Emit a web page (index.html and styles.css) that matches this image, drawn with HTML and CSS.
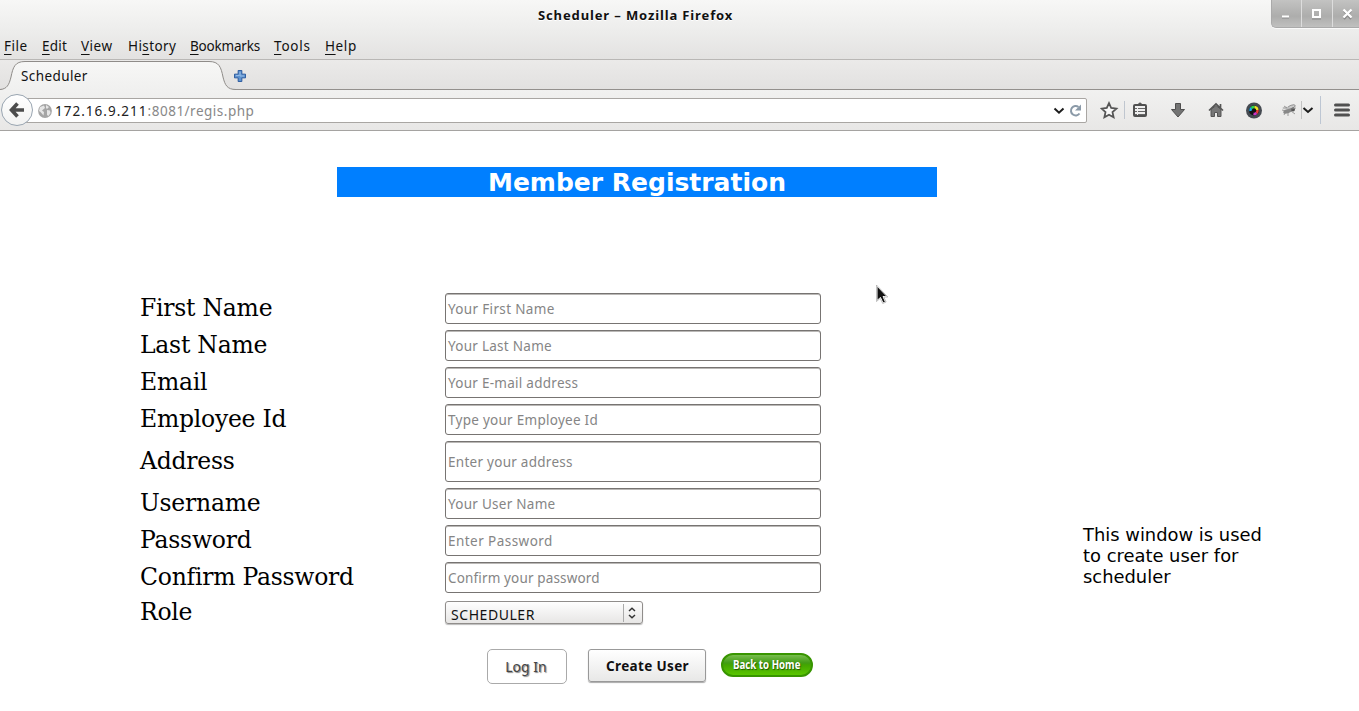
FILE: index.html
```html
<!DOCTYPE html>
<html lang="en">
<head>
<meta charset="utf-8">
<title>Scheduler</title>
<link rel="stylesheet" href="styles.css">
</head>
<body>
<header class="chrome">
  <div class="titlebar">
    <div class="window-title">Scheduler – Mozilla Firefox</div>
    <div class="window-controls">
      <span class="control"><svg width="30" height="27"><path d="M11 17.5h7" stroke="#888" stroke-width="2"/><path d="M11 16.5h7" stroke="#fff" stroke-width="2"/></svg></span>
      <span class="control"><svg width="30" height="27"><path d="M10 19h9" stroke="#888" stroke-width="1"/><rect x="11" y="10" width="7" height="7" fill="none" stroke="#fff" stroke-width="2"/></svg></span>
      <span class="control"><svg width="30" height="27"><path d="M11 11l7 8M18 11l-7 8" stroke="#888" stroke-width="2"/><path d="M10.500 9.500l8 8M18.500 9.500l-8 8" stroke="#fff" stroke-width="2.300"/></svg></span>
    </div>
  </div>
  <nav class="menubar">
    <span class="menu file"><u>F</u>ile</span>
    <span class="menu edit"><u>E</u>dit</span>
    <span class="menu view"><u>V</u>iew</span>
    <span class="menu history">Hi<u>s</u>tory</span>
    <span class="menu bookmarks"><u>B</u>ookmarks</span>
    <span class="menu tools-menu"><u>T</u>ools</span>
    <span class="menu help"><u>H</u>elp</span>
  </nav>
  <div class="tabstrip">
    <svg class="tab-shape" width="236" height="30" viewBox="0 0 236 30">
      <defs><linearGradient id="tabfill" x1="0" y1="0" x2="0" y2="1"><stop offset="0" stop-color="#f7f7f6"/><stop offset="1" stop-color="#f0f0ef"/></linearGradient></defs>
      <path d="M0 30V29.500C7 29 9 25 11 17C13 7 15 1.500 25 1.500H209C219 1.500 221 7 223 17C225 25 227 29.500 236 29.500V30Z" fill="url(#tabfill)"/>
      <path d="M0 29.500C7 29 9 25 11 17C13 7 15 1.500 25 1.500H209C219 1.500 221 7 223 17C225 25 227 29.500 236 29.500" fill="none" stroke="#8f8c89"/>
    </svg>
    <span class="tab-label">Scheduler</span>
    <svg class="new-tab" width="12" height="12" viewBox="0 0 13 13"><path d="M4.500.5h4v4h4v4h-4v4h-4v-4h-4v-4h4z" fill="#5e93d0" stroke="#23549a"/><path d="M6.500 2v4.500H11M2 6h4" fill="none" stroke="#9cc0e8"/></svg>
  </div>
  <div class="navbar">
    <span class="back"><svg width="18" height="18" viewBox="0 0 18 18"><path d="M9.500 2.500L3.500 9l6 6.500M4 9H16" fill="none" stroke="#4c4c4c" stroke-width="3.600"/></svg></span>
    <div class="urlbar">
      <svg class="globe" width="14" height="14" viewBox="0 0 14 14"><circle cx="7" cy="7" r="6.900" fill="#a5a5a5"/><path d="M2 3l4-1.500L7 4 4 6.500 6 8l-.5 3.500L2.500 8 1 7zM8 1l3 2-2 2-1-1zM9 6l3 .5.500 2.500-2 3-1.500-1z" fill="#e6e6e6"/></svg>
      <span class="url"><b>172.16.9.211</b>:8081/regis.php</span>
      <svg class="drop" width="12" height="8" viewBox="0 0 12 8"><path d="M1.500 1.500L6 5.700l4.500-4.200" fill="none" stroke="#1c1c1c" stroke-width="2"/></svg>
      <svg class="reload" width="13" height="13" viewBox="0 0 13 13"><path d="M10.500 9.500A4.700 4.700 0 1 1 9.500 3" fill="none" stroke="#8b9aa8" stroke-width="2"/><path d="M12 .5v6H6z" fill="#8b9aa8"/></svg>
    </div>
    <div class="tools">
      <svg width="259" height="38" viewBox="1100 91 259 38">
        <path d="M1109 103.200l2.200 4.800 5.200.6-3.900 3.500 1.100 5.200-4.600-2.600-4.600 2.600 1.100-5.200-3.900-3.500 5.200-.6z" fill="#f8f8f8" stroke="#555" stroke-width="1.800"/>
        <path d="M1124.500 101v18" stroke="#bfc6cf"/>
        <rect x="1134" y="105" width="12" height="11" rx="1" fill="#eee" stroke="#505050" stroke-width="2"/><path d="M1137 105q.5-.5 1.500-.5 0-1.500 1.500-1.500t1.500 1.500q1 0 1.500.5" stroke="#505050" fill="#505050"/>
        <path d="M1135 108.500h2m1 0h7M1135 111.500h2m1 0h7M1135 114.500h2m1 0h7" stroke="#666"/>
        <path d="M1175.500 103.500h5v6h4l-6.500 7.500-6.500-7.500h4z" fill="#737373" stroke="#4e4e4e"/>
        <path d="M1211 109.500v7h3.500v-4h3v4h3.500v-7l-5-4z" fill="#777" stroke="#555"/><path d="M1209 110.500l7-6.500 7 6.500M1220.500 104v4" fill="none" stroke="#555" stroke-width="1.700"/>
        <circle cx="1254" cy="110.500" r="8" fill="#454a51"/><circle cx="1254" cy="110.500" r="5" fill="#111"/>
        <g fill="none" stroke-width="2.500"><path d="M1250.500 111a3.500 3.500 0 0 1 1-3" stroke="#18a8ed"/><path d="M1251.500 108a3.500 3.500 0 0 1 3-1" stroke="#2cd649"/><path d="M1254.500 107a3.500 3.500 0 0 1 3 3" stroke="#eee329"/><path d="M1257.500 110a3.500 3.500 0 0 1-1 3" stroke="#ed3b34"/><path d="M1256.500 113a3.500 3.500 0 0 1-3 .800" stroke="#cb35c8"/></g>
        <ellipse cx="1288" cy="111" rx="5" ry="2" transform="rotate(-20 1288 111)" fill="#888"/><ellipse cx="1291.500" cy="107" rx="4" ry="1.600" transform="rotate(-20 1291 107)" fill="#ccc" stroke="#888" stroke-width=".8"/><ellipse cx="1286" cy="108" rx="3.500" ry="1.300" fill="#bbb"/><circle cx="1293" cy="109.500" r="2" fill="#555"/><path d="M1282 110l4 1-2 4M1288 112v4M1291 111l4 3M1284 106l3 2M1291 109l5-1" stroke="#888" stroke-width=".8" fill="none"/>
        <path d="M1301.500 101v18" stroke="#c3c3c3"/><path d="M1303.500 108L1308 112l4.500-4" fill="none" stroke="#1c1c1c" stroke-width="2"/>
        <path d="M1320.500 96v28" stroke="#bdc6d3"/>
        <path d="M1335.500 105h13M1335.500 110h13M1335.500 115h13" stroke="#505050" stroke-width="3" stroke-linecap="round"/>
      </svg>
    </div>
  </div>
</header>
<main class="page">
  <h1 class="banner">Member Registration</h1>
  <form class="registration">
    <div class="row"><label>First Name</label><div class="field"><span class="p1">Your First Name</span></div></div>
    <div class="row"><label>Last Name</label><div class="field"><span>Your Last Name</span></div></div>
    <div class="row"><label>Email</label><div class="field"><span>Your E-mail address</span></div></div>
    <div class="row"><label>Employee Id</label><div class="field"><span>Type your Employee Id</span></div></div>
    <div class="row tall"><label>Address</label><div class="field"><span>Enter your address</span></div></div>
    <div class="row"><label>Username</label><div class="field"><span>Your User Name</span></div></div>
    <div class="row"><label>Password</label><div class="field"><span class="p7">Enter Password</span></div></div>
    <div class="row"><label>Confirm Password</label><div class="field"><span class="p8">Confirm your password</span></div></div>
    <div class="row role"><label>Role</label><div class="select"><span>SCHEDULER</span><i><svg width="10" height="12" viewBox="0 0 10 12"><path d="M2 4l3-2.700L8 4M2 8l3 2.700L8 8" fill="none" stroke="#333" stroke-width="1.500"/></svg></i></div></div>
    <div class="actions">
      <a class="login">Log In</a>
      <a class="create">Create User</a>
      <a class="home"><span>Back to Home</span></a>
    </div>
  </form>
  <aside class="note">This window is used<br>to create user for<br>scheduler</aside>
  <svg class="cursor" width="14" height="20" viewBox="0 0 14 20"><path d="M1 1v14.500l3.500-3 2.500 5.500 2.500-1-2.500-5.500h4z" fill="#111" stroke="#fff"/><path d="M.5 0v16.500l3.700-3.200 2.500 5.200 3.400-1.500-2.300-5h4z" fill="none" stroke="#999" stroke-width=".6"/></svg>
</main>
</body>
</html>
```
FILE: styles.css
```css
* { box-sizing: border-box; }
body { margin: 0; width: 1359px; height: 711px; overflow: hidden; background: #fff; font: 14px/20px "Noto Sans", "Open Sans", sans-serif; color: #111; }
svg { display: block; flex: none; }
.chrome { height: 131px; background: #ececeb; }
.titlebar { height: 30px; display: flex; justify-content: flex-end; background: linear-gradient(#f7f7f6, #ededec); }
.window-title { width: 195px; margin-right: 538px; padding-top: 5px; font-weight: bold; font-size: 13px; letter-spacing: .87px; white-space: nowrap; text-shadow: 0 1px #fff; }
.window-controls { width: 88px; height: 28px; display: flex; overflow: hidden; background: linear-gradient(#c3c3c2, #adadac 60%, #c0c0bf); border: solid #aaa; border-width: 0 0 1px 1px; border-radius: 0 0 0 5px; box-shadow: 0 1px #fafafa; }
.control { width: 31px; flex: none; border-right: 1px solid #ddd; margin-left: -1px; }
.control + .control { margin-left: 0; }
.menubar { height: 30px; display: flex; padding: 6px 0 0 4px; background: linear-gradient(#ededec, #e3e2e1); border-bottom: 1px solid #b9b7b5; font-size: 13.500px; line-height: 21px; white-space: nowrap; }
.menu u { text-underline-offset: 3px; text-decoration-thickness: 1px; }
.file { width: 38px; letter-spacing: .5px; }
.edit { width: 39px; letter-spacing: .2px; }
.view { width: 47px; letter-spacing: .5px; }
.history { width: 62px; letter-spacing: .4px; }
.bookmarks { width: 84px; letter-spacing: -.2px; }
.tools-menu { width: 51px; letter-spacing: .8px; }
.help { letter-spacing: .6px; }
.tabstrip { height: 30px; display: grid; grid-template-columns: 21px 213px 1fr; background: linear-gradient(#ebeae9, #e2e1e0); border-bottom: 1px solid #93908d; }
.tab-shape { grid-area: 1 / 1 / 2 / 4; }
.tab-label { grid-area: 1 / 2; padding-top: 6px; font-size: 13.500px; letter-spacing: .4px; }
.new-tab { grid-area: 1 / 3; margin-top: 10px; }
.navbar { height: 41px; display: flex; background: linear-gradient(#f1f1f0, #e8e7e6); border-bottom: 1px solid #a5a3a1; }
.back { z-index: 1; width: 32px; height: 32px; flex: none; margin: 4px 0 0 1px; border: 1px solid #99a5b1; border-radius: 50%; background: linear-gradient(#fff, #f2f2f1); display: grid; place-items: center; }
.urlbar { width: 1072px; height: 25px; margin: 8px 13px 0 -18px; padding-left: 22px; display: flex; align-items: center; background: #fff; border: 1px solid #a9a6a3; border-radius: 2px; }
.url { margin-left: 3px; flex: 1; color: #888; font-size: 13.500px; letter-spacing: .5px; }
.url b { color: #222; font-weight: normal; letter-spacing: 1.020px; }
.drop { margin-right: 4px; }
.reload { margin-right: 4px; }
.tools { width: 259px; margin-top: 1px; }
.page { position: relative; height: 580px; }
.page::before { content: ""; display: table; }
.banner { width: 600px; height: 30px; margin: 36px 0 96px 337px; background: #007fff; color: #fff; text-align: center; font: bold 25px/31px "DejaVu Sans", sans-serif; }
.registration { margin-left: 140px; width: 681px; display: flex; flex-direction: column; gap: 6px; }
.row { height: 31px; display: grid; grid-template-columns: 305px 376px; align-items: center; }
.row.tall { height: 41px; }
.row.role { height: 24px; margin-top: 2px; }
label { padding-bottom: 2px; font: 23.500px/22px "DejaVu Serif", serif; letter-spacing: -.25px; color: #000; white-space: nowrap; }
.field { height: 100%; display: flex; align-items: center; padding: 1px 0 0 2px; border: 1px solid #777472; border-radius: 3px; box-shadow: inset 0 1px #bab8b6; background: #fff; color: #858585; font-size: 13.500px; letter-spacing: .27px; }
.p1 { letter-spacing: .34px; }
.p7 { letter-spacing: .45px; }
.p8 { letter-spacing: .15px; }
.select { width: 198px; height: 23px; display: flex; align-items: center; border: 1px solid #908d8b; border-radius: 3px; background: linear-gradient(#fefefe, #e7e6e5); box-shadow: 0 1px 1px #bbb; align-self: start; }
.select span { flex: 1; padding: 5px 0 0 5px; font-size: 14px; letter-spacing: .55px; }
.select i { height: 18px; width: 19px; border-left: 1px solid #aaa; display: grid; align-items: center; padding-left: 3px; }
.actions { display: flex; align-items: flex-start; margin: 18px 0 0 347px; white-space: nowrap; }
.login { width: 80px; height: 35px; border: 1px solid #aaa; border-radius: 5px; display: grid; place-items: center; padding-right: 2px; color: #444; font-size: 14px; text-shadow: 1px 1px 1px #888; }
.create { width: 118px; height: 33px; margin-left: 21px; border: 1px solid #999; border-radius: 3px; display: grid; place-items: center; padding-left: 1px; font-weight: bold; font-size: 13.500px; letter-spacing: .35px; background: linear-gradient(#fff, #e8e8e7); box-shadow: 0 1px 1px #aaa; }
.home { width: 92px; height: 24px; margin: 4px 0 0 15px; border: 2px solid #389500; border-radius: 12px; display: grid; place-items: center; background: linear-gradient(#78bd4d, #419c14 40%, #43a600 50%, #5ac600); color: #fff; font: bold 12px/16px "Open Sans", sans-serif; text-shadow: 1px 1px 1px #205600; }
.home span { transform: scaleX(.81); }
.note { position: absolute; left: 1083px; top: 393px; font: 17.900px/21px "DejaVu Sans", sans-serif; color: #000; white-space: nowrap; }
.cursor { position: absolute; left: 876px; top: 154px; }
```
